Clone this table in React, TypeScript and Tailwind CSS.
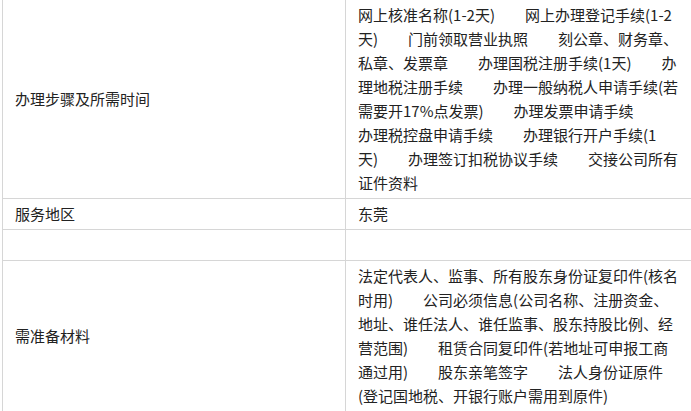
const Gap = () => <span className="inline-block w-[30px]" />;

function Row({ label, children }: { label: string; children?: React.ReactNode }) {
  return (
    <div className="flex border-b border-[#d6d6d6]">
      <div className="flex w-[343px] shrink-0 items-center border-r border-[#d6d6d6] px-3">
        {label}
      </div>
      <div className="w-[345px] shrink-0 py-[3px] pl-3 pr-[10px] min-h-[30px]">{children}</div>
    </div>
  );
}

export default function App() {
  return (
    <div className="w-[691px] overflow-hidden bg-white pl-[2px] font-['Microsoft_YaHei','Noto_Sans_CJK_SC',sans-serif] text-[15px] leading-6 text-[#222]">
      <div className="w-[690px] border-l border-r border-[#d6d6d6]">
        <Row label="办理步骤及所需时间">
          网上核准名称(1-2天)<Gap />网上办理登记手续(1-2
          <br />
          天)<Gap />门前领取营业执照<Gap />刻公章、财务章、
          <br />
          私章、发票章<Gap />办理国税注册手续(1天)<Gap />办
          <br />
          理地税注册手续<Gap />办理一般纳税人申请手续(若
          <br />
          需要开17%点发票)<Gap />办理发票申请手续
          <br />
          办理税控盘申请手续<Gap />办理银行开户手续(1
          <br />
          天)<Gap />办理签订扣税协议手续<Gap />交接公司所有
          <br />
          证件资料
        </Row>
        <Row label="服务地区">东莞</Row>
        <Row label="">{"\u00a0"}</Row>
        <Row label="需准备材料">
          法定代表人、监事、所有股东身份证复印件(核名
          <br />
          时用)<Gap />公司必须信息(公司名称、注册资金、
          <br />
          地址、谁任法人、谁任监事、股东持股比例、经
          <br />
          营范围)<Gap />租赁合同复印件(若地址可申报工商
          <br />
          通过用)<Gap />股东亲笔签字<Gap />法人身份证原件
          <br />
          (登记国地税、开银行账户需用到原件)
        </Row>
      </div>
    </div>
  );
}
